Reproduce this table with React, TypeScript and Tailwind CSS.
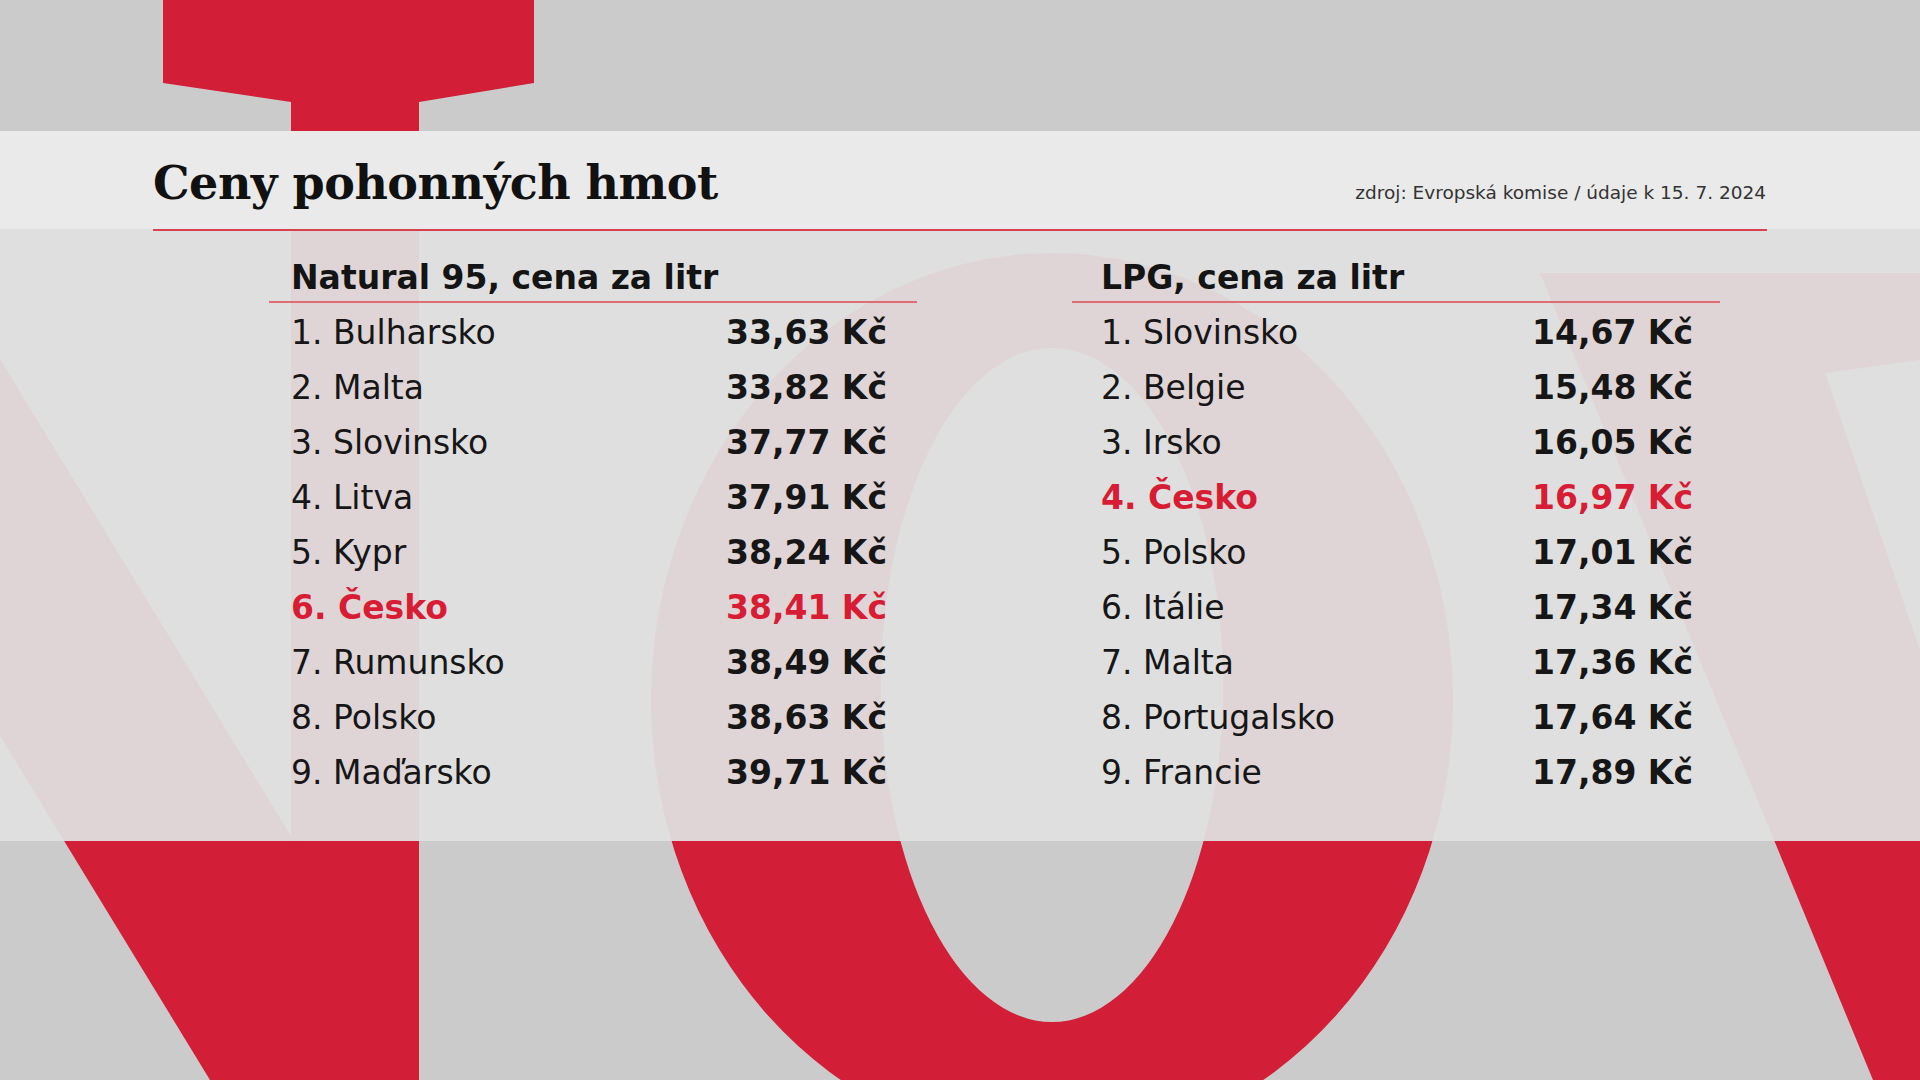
type PriceRow = {
  label: string;
  price: string;
  highlight?: boolean;
};

const natural: PriceRow[] = [
  { label: '1. Bulharsko', price: '33,63 Kč' },
  { label: '2. Malta', price: '33,82 Kč' },
  { label: '3. Slovinsko', price: '37,77 Kč' },
  { label: '4. Litva', price: '37,91 Kč' },
  { label: '5. Kypr', price: '38,24 Kč' },
  { label: '6. Česko', price: '38,41 Kč', highlight: true },
  { label: '7. Rumunsko', price: '38,49 Kč' },
  { label: '8. Polsko', price: '38,63 Kč' },
  { label: '9. Maďarsko', price: '39,71 Kč' },
];

const lpg: PriceRow[] = [
  { label: '1. Slovinsko', price: '14,67 Kč' },
  { label: '2. Belgie', price: '15,48 Kč' },
  { label: '3. Irsko', price: '16,05 Kč' },
  { label: '4. Česko', price: '16,97 Kč', highlight: true },
  { label: '5. Polsko', price: '17,01 Kč' },
  { label: '6. Itálie', price: '17,34 Kč' },
  { label: '7. Malta', price: '17,36 Kč' },
  { label: '8. Portugalsko', price: '17,64 Kč' },
  { label: '9. Francie', price: '17,89 Kč' },
];

// big red letter shapes behind the panel
function Backdrop() {
  return (
    <svg
      className="absolute inset-0"
      width="1920"
      height="1080"
      viewBox="0 0 1920 1080"
      aria-hidden="true"
    >
      <g fill="#d21e37">
        <path d="M163 0H534V83L419 102V1080H291V102L163 83Z" />
        <path d="M-449 0H-219L419 1046V1080H210Z" />
        <path
          fillRule="evenodd"
          d="M651 700a401 447 0 1 0 802 0a401 447 0 1 0 -802 0ZM881 685a171 337 0 1 0 342 0a171 337 0 1 0 -342 0Z"
        />
        <path d="M1540 273H1920V360L1825 373L1920 650V1080H1873Z" />
      </g>
    </svg>
  );
}

function PriceColumn({
  title,
  rows,
  inset,
}: {
  title: string;
  rows: PriceRow[];
  inset: string;
}) {
  return (
    <div className="w-[648px]">
      <h2 className={`h-[45px] text-[33px] leading-[44px] font-bold text-[#141414] ${inset}`}>{title}</h2>
      <div className="h-[2px] bg-[#df6d74]" />
      <ul className={`pt-[2px] ${inset}`}>
        {rows.map((row) => (
          <li
            key={row.label}
            className={`flex h-[55px] items-center justify-between text-[33px] leading-[55px] ${
              row.highlight ? 'text-[#d71c34]' : 'text-[#161616]'
            }`}
          >
            <span className={row.highlight ? 'font-bold' : 'font-normal'}>{row.label}</span>
            <span className="font-bold">{row.price}</span>
          </li>
        ))}
      </ul>
    </div>
  );
}

export default function App() {
  return (
    <div className="relative h-[1080px] w-[1920px] overflow-hidden bg-[#cbcbcb] font-['DejaVu_Sans',sans-serif]">
      <Backdrop />
      <div className="relative pt-[131px]">
        <div className="h-[710px] bg-[#dfdfdf]/95">
          <div className="h-[98px] bg-[#eaeaea] px-[153px] pt-[29px]">
            <div className="flex items-baseline justify-between">
              <h1 className="font-['DejaVu_Serif',serif] text-[46px] leading-none font-bold tracking-[-0.5px] text-[#111]">
                Ceny pohonných hmot
              </h1>
              <p className="mr-[1px] text-[18.5px] leading-none text-[#333]">
                zdroj: Evropská komise / údaje k 15. 7. 2024
              </p>
            </div>
          </div>
          <div className="mx-[153px] h-[2px] bg-[#d8414d]" />
          <div className="mt-[25px] flex gap-[155px] pl-[269px]">
            <PriceColumn title="Natural 95, cena za litr" rows={natural} inset="pl-[22px] pr-[30px]" />
            <PriceColumn title="LPG, cena za litr" rows={lpg} inset="pl-[29px] pr-[27px]" />
          </div>
        </div>
      </div>
    </div>
  );
}
